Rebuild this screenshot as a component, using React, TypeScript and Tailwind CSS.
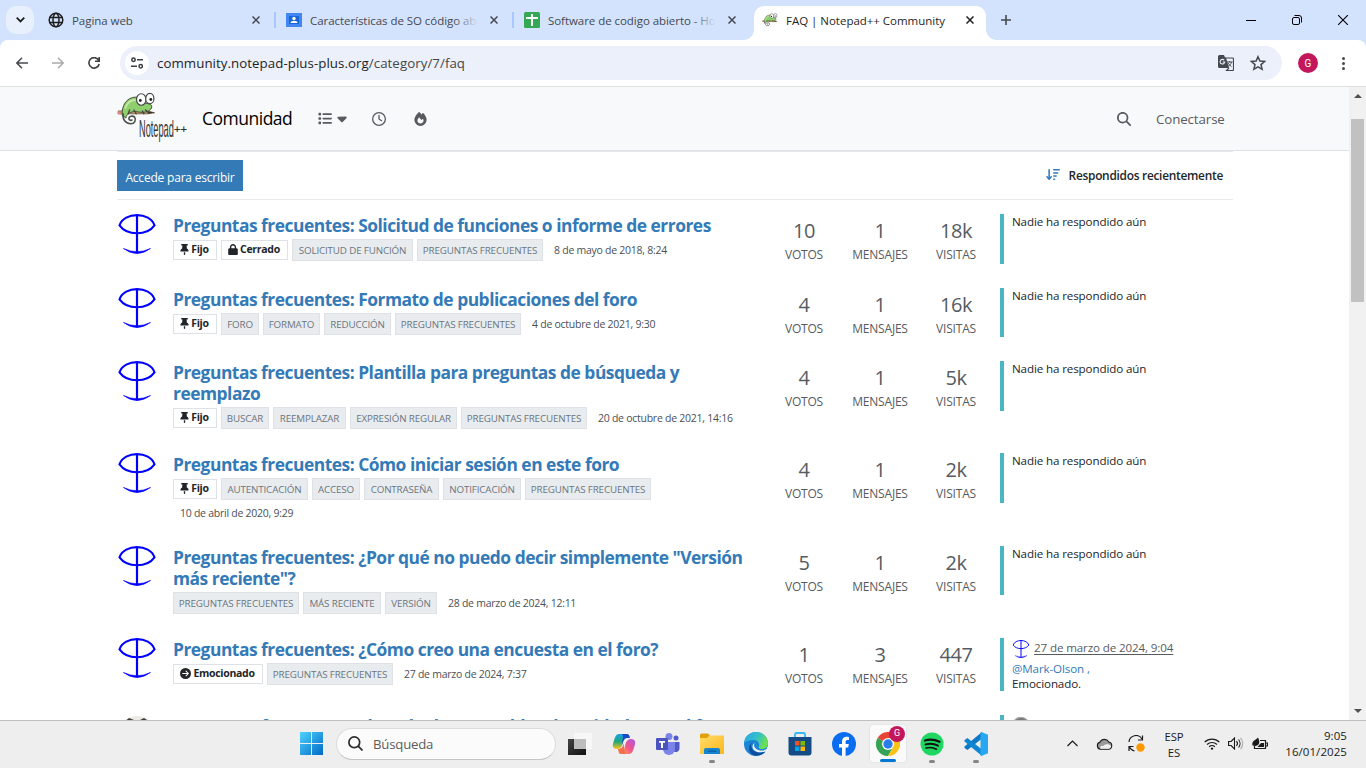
import React from "react";
import {
  FaArrowDownWideShort,
  FaCaretDown,
  FaCircleArrowRight,
  FaFire,
  FaList,
  FaLock,
  FaMagnifyingGlass,
  FaRegClock,
  FaThumbtack,
} from "react-icons/fa6";

/* ---------- shared drawings ---------- */

function Chameleon({ className }: { className: string }) {
  return (
    <svg className={className} viewBox="0 0 42 36" fill="none">
      <path d="M2 22.5h31l7-1-7-2H2z" fill="#c9a06a" stroke="#6b4a35" strokeWidth="0.8" />
      <path d="M1 20h5v3H1z" fill="#d98880" />
      <path d="M33 20l7 1.2-7 1.2z" fill="#333" />
      <path
        d="M6 24C5 14 11 5 20 5c5 0 6 3 9 6 4 1 8 1 8 4 0 4-6 6-10 6-5 0-8-2-12 0-4 2-5 4-5 6z"
        fill="#8fce6c"
        stroke="#3c4a35"
        strokeWidth="1"
      />
      <path d="M9 17c2-6 6-9 11-9" stroke="#c3e8a5" strokeWidth="2" />
      <path
        d="M7 22c-1 7 3 11 8 11 4 0 6-4 4-7-2-2-6-1-6 1.500 0 2 3 2.500 3.500 1"
        stroke="#4a5049"
        strokeWidth="1.700"
      />
      <path d="M14 18l-2 5M18 18l3 5M27 19l2 4M30 18l4 4" stroke="#444" strokeWidth="1.400" />
      <ellipse cx="26" cy="7.500" rx="5" ry="6" fill="#fff" stroke="#444" strokeWidth="1.200" />
      <ellipse cx="35" cy="6.500" rx="4.300" ry="5.500" fill="#fff" stroke="#444" strokeWidth="1.200" />
      <circle cx="25" cy="8.500" r="1.500" fill="#222" />
      <circle cx="36" cy="7.500" r="1.500" fill="#222" />
    </svg>
  );
}

function Avatar({ className }: { className: string }) {
  return (
    <svg className={className} viewBox="0 0 40 40" fill="none">
      <path d="M2.500 11.300C7-2.300 33-2.300 37.500 11.300C30 21.800 10 21.800 2.500 11.300z" stroke="#0000ff" strokeWidth="2.100" />
      <path d="M20 1v38.500" stroke="#0000ff" strokeWidth="2.200" />
      <path d="M6.500 34.500Q20 41 33.500 34.500Q20 44.500 6.500 34.500z" fill="#0000ff" stroke="#0000ff" strokeWidth="0.600" />
    </svg>
  );
}

function Cross({ className }: { className: string }) {
  return (
    <svg className={className} viewBox="0 0 8 8" stroke="currentColor" strokeWidth="1.500">
      <path d="M0.500 0.500l7 7M7.500 0.500l-7 7" />
    </svg>
  );
}

/* ---------- browser chrome ---------- */

type TabProps = { icon: React.ReactNode; title: string; active?: boolean; line?: boolean; fade?: boolean };

function Tab({ icon, title, active, line, fade }: TabProps) {
  return (
    <div className={"relative flex h-[34px] w-[238px] shrink-0 items-center pl-[9px]" + (active ? " pb-[6px]" : "")}>
      {active && (
        <>
          <span className="absolute inset-y-0 left-[1px] w-[232px] rounded-t-[10px] bg-white" />
          <span className="absolute bottom-0 -left-[9px] h-[10px] w-[10px] bg-[radial-gradient(circle_at_0_0,#d3e3fd_9.500px,#fff_10px)]" />
          <span className="absolute bottom-0 left-[233px] h-[10px] w-[10px] bg-[radial-gradient(circle_at_100%_0,#d3e3fd_9.500px,#fff_10px)]" />
        </>
      )}
      <span className="relative h-4 w-4">{icon}</span>
      <span className={"relative mt-px ml-2 w-[168px] overflow-hidden text-[11.500px] leading-4 whitespace-nowrap" + (active ? " tracking-[-0.02px] text-[#1f1f1f]" : " tracking-[-0.05px] text-[#45494f]")}>
        {title}
        {fade && <span className="absolute inset-y-0 right-0 w-6 bg-gradient-to-r from-[#d3e3fd]/0 to-[#d3e3fd]" />}
      </span>
      <Cross className={active ? "relative ml-[12px] h-2 w-2 text-[#1f1f1f]" : "relative ml-[12px] h-2 w-2 text-[#45494f]"} />
      {line && <span className="absolute top-[9px] right-[1px] h-4 w-[2px] bg-[#a8c7fa]" />}
    </div>
  );
}

function TabStrip() {
  return (
    <div className="flex h-10 items-end bg-[#d3e3fd]">
      <div className="mb-[6px] ml-[6px] flex h-7 w-7 items-center justify-center rounded-[10px] bg-[#e9f0fd]">
        <svg className="h-[6px] w-[9px]" viewBox="0 0 9 6" fill="none" stroke="#1f1f1f" strokeWidth="1.800">
          <path d="M0.700 0.700l3.800 3.800 3.800-3.800" />
        </svg>
      </div>
      <div className="ml-[5px] flex h-[34px] items-start pb-0">
        <div className="-mt-[3px] flex h-[34px]">
          <Tab
            line
            title="Pagina web"
            icon={
              <svg viewBox="0 0 16 16" fill="none" stroke="#1f1f1f" strokeWidth="1.500">
                <circle cx="8" cy="8" r="6.800" />
                <ellipse cx="8" cy="8" rx="3" ry="6.800" />
                <path d="M1.500 5.500h13M1.500 10.500h13" />
              </svg>
            }
          />
          <Tab
            line
            fade
            title="Características de SO código abierto"
            icon={
              <svg viewBox="0 0 16 16">
                <path d="M0 1h16v14H0z" fill="#4285f4" />
                <path d="M3 4h10v8H3z" fill="#1967d2" />
                <circle cx="8" cy="6.500" r="1.700" fill="#fff" />
                <path d="M4.500 11c0-3 7-3 7 0z" fill="#fff" />
              </svg>
            }
          />
          <Tab
            fade
            title="Software de codigo abierto - Hojas de cálculo"
            icon={
              <svg viewBox="0 0 16 16">
                <rect width="16" height="16" rx="1.500" fill="#34a853" />
                <path d="M2 5h12v2H9v7H7V7H2zM7 2h2v3H7z" fill="#fff" />
              </svg>
            }
          />
        </div>
        <Tab active title="FAQ | Notepad++ Community" icon={<Chameleon className="h-4 w-4" />} />
      </div>
      <svg className="mb-[15px] ml-[10px] h-[10px] w-[10px]" viewBox="0 0 10 10" stroke="#45494f" strokeWidth="1.600">
        <path d="M5 0v10M0 5h10" />
      </svg>
      <div className="mb-[15px] ml-auto flex items-center gap-9 pr-[18px]">
        <span className="h-px w-[10px] bg-black" />
        <svg className="h-[10px] w-[10px]" viewBox="0 0 10 10" fill="none" stroke="#000" strokeWidth="1">
          <rect x="0.500" y="2.500" width="7" height="7" rx="1.500" />
          <path d="M2.500 0.500H7a2.500 2.500 0 0 1 2.500 2.500v4.500" />
        </svg>
        <svg className="h-[10px] w-[10px]" viewBox="0 0 10 10" stroke="#000" strokeWidth="1.100">
          <path d="M0 0l10 10M10 0L0 10" />
        </svg>
      </div>
    </div>
  );
}

function Toolbar() {
  return (
    <div className="h-[47px] shrink-0 bg-[#d3e3fd]">
      <div className="flex h-[47px] items-center rounded-t-[8px] border-b border-[#dde1dc] bg-white">
        <svg className="ml-4 h-3 w-3" viewBox="0 0 12 12" fill="none" stroke="#45494f" strokeWidth="1.500">
          <path d="M12 6H1M6 0.800L0.900 6 6 11.200" />
        </svg>
        <svg className="ml-[24px] h-3 w-3" viewBox="0 0 12 12" fill="none" stroke="#aaabad" strokeWidth="1.500">
          <path d="M0 6h11M6 0.800L11.100 6 6 11.200" />
        </svg>
        <svg className="ml-[24px] h-3 w-3" viewBox="0 0 12 12" fill="none" stroke="#3c4043" strokeWidth="1.600">
          <path d="M10.600 3.200A5.200 5.200 0 1 0 11.200 7M11.200 0v4.300H7" />
        </svg>
        <div className="ml-5 flex h-[34px] w-[1162px] items-center rounded-full bg-[#ecf0fa] pr-4 pl-[5px]">
          <span className="flex h-6 w-6 items-center justify-center rounded-full bg-white">
            <svg className="h-3 w-3" viewBox="0 0 12 12" fill="none" stroke="#3c4043" strokeWidth="1.500">
              <circle cx="2.500" cy="2.700" r="1.700" />
              <path d="M6 2.700h6M0 9.300h6" />
              <circle cx="9.700" cy="9.300" r="1.700" />
            </svg>
          </span>
          <span className="ml-2 text-[13.300px] leading-5 tracking-[0.050px] whitespace-nowrap text-[#1f1f1f]">
            community.notepad-plus-plus.org<span className="text-[#474747]">/category/7/faq</span>
          </span>
          <svg className="ml-auto h-4 w-4" viewBox="0 0 16 16">
            <path d="M1.500 0H6l1 2.500h1L11 13H1.500A1.500 1.500 0 0 1 0 11.500v-10A1.500 1.500 0 0 1 1.500 0z" fill="#45494f" />
            <path d="M7.500 3h7a1 1 0 0 1 1 1v10.500a1 1 0 0 1-1 1H8.500L11 13" fill="none" stroke="#45494f" strokeWidth="1.200" />
            <path d="M6.200 5.200A2.300 2.300 0 1 0 6.700 7H4.600" fill="none" stroke="#ecf0fa" strokeWidth="1.100" />
            <path d="M9 7h5.500M11.500 6v1M13.500 7c-.5 2-2 3.500-3.500 4.500M10 8c.8 1.500 2 2.500 3.500 3.500" fill="none" stroke="#45494f" strokeWidth="1" />
          </svg>
          <svg className="ml-4 h-4 w-4" viewBox="0 0 16 16" fill="none" stroke="#45494f" strokeWidth="1.500">
            <path d="M8 1.700l1.900 4.400 4.700.4-3.600 3.100 1.100 4.700L8 11.800l-4.100 2.500L5 9.600 1.400 6.500l4.700-.4z" />
          </svg>
        </div>
        <span className="ml-4 flex h-5 w-5 items-center justify-center rounded-full bg-[#c2185b] font-['Roboto',sans-serif] text-[10px] text-white">G</span>
        <span className="ml-[24px] flex flex-col gap-[2px]">
          <span className="h-[3px] w-[3px] rounded-full bg-[#45494f]" />
          <span className="h-[3px] w-[3px] rounded-full bg-[#45494f]" />
          <span className="h-[3px] w-[3px] rounded-full bg-[#45494f]" />
        </span>
      </div>
    </div>
  );
}

/* ---------- forum page ---------- */

type Tag = { text: string; width: string };
type Topic = {
  height: string;
  bar: string;
  title: string[];
  badges: { kind: "pin" | "lock" | "move"; text: string; width: string }[];
  tags: Tag[];
  date: string;
  wrapDate?: boolean;
  stats: [string, string, string];
  reply?: boolean;
};

const FAQ: Tag = { text: "PREGUNTAS FRECUENTES", width: "w-[126px]" };
const PIN = { kind: "pin" as const, text: "Fijo", width: "w-[44px]" };

const topics: Topic[] = [
  {
    height: "h-[74px]",
    bar: "h-[50px]",
    title: ["Preguntas frecuentes: Solicitud de funciones o informe de errores"],
    badges: [PIN, { kind: "lock", text: "Cerrado", width: "w-[67px]" }],
    tags: [{ text: "SOLICITUD DE FUNCIÓN", width: "w-[121px]" }, FAQ],
    date: "8 de mayo de 2018, 8:24",
    stats: ["10", "1", "18k"],
  },
  {
    height: "h-[73px]",
    bar: "h-[49px]",
    title: ["Preguntas frecuentes: Formato de publicaciones del foro"],
    badges: [PIN],
    tags: [{ text: "FORO", width: "w-[38px]" }, { text: "FORMATO", width: "w-[57px]" }, { text: "REDUCCIÓN", width: "w-[67px]" }, FAQ],
    date: "4 de octubre de 2021, 9:30",
    stats: ["4", "1", "16k"],
  },
  {
    height: "h-[92px]",
    bar: "h-[50px]",
    title: ["Preguntas frecuentes: Plantilla para preguntas de búsqueda y", "reemplazo"],
    badges: [PIN],
    tags: [{ text: "BUSCAR", width: "w-[48px]" }, { text: "REEMPLAZAR", width: "w-[73px]" }, { text: "EXPRESIÓN REGULAR", width: "w-[107px]" }, FAQ],
    date: "20 de octubre de 2021, 14:16",
    stats: ["4", "1", "5k"],
  },
  {
    height: "h-[93px]",
    bar: "h-[50px]",
    title: ["Preguntas frecuentes: Cómo iniciar sesión en este foro"],
    badges: [PIN],
    tags: [
      { text: "AUTENTICACIÓN", width: "w-[87px]" },
      { text: "ACCESO", width: "w-[48px]" },
      { text: "CONTRASEÑA", width: "w-[75px]" },
      { text: "NOTIFICACIÓN", width: "w-[78px]" },
      FAQ,
    ],
    date: "10 de abril de 2020, 9:29",
    wrapDate: true,
    stats: ["4", "1", "2k"],
  },
  {
    height: "h-[92px]",
    bar: "h-[49px]",
    title: ['Preguntas frecuentes: ¿Por qué no puedo decir simplemente "Versión', 'más reciente"?'],
    badges: [],
    tags: [FAQ, { text: "MÁS RECIENTE", width: "w-[78px]" }, { text: "VERSIÓN", width: "w-[52px]" }],
    date: "28 de marzo de 2024, 12:11",
    stats: ["5", "1", "2k"],
  },
  {
    height: "h-[77px]",
    bar: "h-[53px]",
    title: ["Preguntas frecuentes: ¿Cómo creo una encuesta en el foro?"],
    badges: [{ kind: "move", text: "Emocionado", width: "w-[90px]" }],
    tags: [FAQ],
    date: "27 de marzo de 2024, 7:37",
    stats: ["1", "3", "447"],
    reply: true,
  },
];

function BadgeIcon({ kind }: { kind: "pin" | "lock" | "move" }) {
  if (kind === "pin") return <FaThumbtack className="mr-[2px] h-[11px] w-[9px]" />;
  if (kind === "lock") return <FaLock className="mr-[2px] h-[11px] w-[10px]" />;
  return <FaCircleArrowRight className="mr-[2px] h-[11px] w-[11px]" />;
}

function Stat({ value, label }: { value: string; label: string }) {
  return (
    <div className="w-[76px] text-center text-[#575b5f]">
      <div className="pt-[3px] text-[20px] leading-[28px] tracking-[-0.4px]">{value}</div>
      <div className="pt-[2px] text-[12px] leading-4 tracking-[-0.2px]">{label}</div>
    </div>
  );
}

function TopicRow({ topic }: { topic: Topic }) {
  return (
    <li className={"flex shrink-0 items-start " + topic.height}>
      <Avatar className="h-10 w-10 shrink-0" />
      <div className="ml-4 w-[593px] shrink-0">
        <h3 className="pt-[1px] text-[17.400px] leading-[21px] font-bold tracking-[-0.490px] whitespace-nowrap text-[#337ab7]">
          {topic.title.map((part) => (
            <span key={part} className="block">
              {part}
            </span>
          ))}
        </h3>
        <div className="flex items-start gap-1 pt-[3px]">
          {topic.badges.map((b) => (
            <span
              key={b.text}
              className={"mt-[1px] flex h-5 items-center justify-center border border-[#dee2e6] pr-px pb-[1px] text-[10.500px] font-bold tracking-[-0.300px] whitespace-nowrap text-[#212529] " + b.width}
            >
              <BadgeIcon kind={b.kind} />
              {b.text}
            </span>
          ))}
          {topic.tags.map((t) => (
            <span
              key={t.text}
              className={"flex h-[22px] items-center justify-center border border-[#dee2e6] bg-[#e9ecef] pt-[2px] text-[9.800px] tracking-[-0.15px] whitespace-nowrap text-[#6c757d] " + t.width}
            >
              {t.text}
            </span>
          ))}
          {!topic.wrapDate && <span className="ml-[7px] pt-[3px] text-[10.500px] leading-4 tracking-[-0.26px] whitespace-nowrap text-[#4b5055]">{topic.date}</span>}
        </div>
        {topic.wrapDate && <div className="ml-[7px] pt-[5px] text-[10.500px] leading-4 tracking-[-0.26px] text-[#4b5055]">{topic.date}</div>}
      </div>
      <Stat value={topic.stats[0]} label="VOTOS" />
      <Stat value={topic.stats[1]} label="MENSAJES" />
      <Stat value={topic.stats[2]} label="VISITAS" />
      <div className={"ml-[6px] w-[233px] border-l-4 border-[#4bb5c1] pl-2 text-[11.600px] tracking-[-0.120px] text-[#212529] " + topic.bar}>
        {topic.reply ? (
          <>
            <div className="flex h-[20px] items-center text-[#575b5f]">
              <Avatar className="mt-[1px] mr-1 h-[18px] w-[18px]" />
              <span className="underline underline-offset-2">27 de marzo de 2024, 9:04</span>
            </div>
            <div className="pt-[3px] leading-[15px]">
              <span className="text-[#337ab7]">@Mark-Olson ,</span>
              <br />
              Emocionado.
            </div>
          </>
        ) : (
          <span className="block leading-4">Nadie ha respondido aún</span>
        )}
      </div>
    </li>
  );
}

function ForumHeader() {
  return (
    <header className="flex h-16 shrink-0 items-center border-b border-[#dee2e6] bg-[#f8f9fa] pl-[117px] text-[#575b5f]">
      <svg className="-mt-[2px] h-[51px] w-[70px]" viewBox="0 0 70 51">
        <svg x="-0.500" y="-0.500" width="40" height="36" viewBox="0 0 42 36">
          <Chameleon className="" />
        </svg>
        <text transform="translate(22 45) scale(0.400 1)" fontFamily="'Liberation Sans', sans-serif" fontSize="23" fill="#333">
          Notepad
        </text>
        <text x="57" y="41" fontFamily="'Liberation Sans', sans-serif" fontSize="11" fill="#333" stroke="#333" strokeWidth="0.200">
          ++
        </text>
      </svg>
      <span className="mb-[2px] ml-[15px] w-[116px] text-[17.500px] leading-6 tracking-[-0.5px] text-black">Comunidad</span>
      <FaList className="h-[15px] w-[14px]" />
      <FaCaretDown className="ml-[5px] h-[15px] w-[10px]" />
      <FaRegClock className="ml-[25px] h-[14px] w-[14px]" />
      <FaFire className="ml-[28px] h-[14px] w-[13px]" />
      <FaMagnifyingGlass className="ml-[690px] h-[14px] w-[14px]" />
      <span className="ml-[25px] text-[13.300px] leading-5 tracking-[-0.1px]">Conectarse</span>
    </header>
  );
}

function Forum() {
  return (
    <div className="flex h-[633px] shrink-0 overflow-hidden">
      <div className="flex w-[1349px] flex-col overflow-hidden bg-white">
        <ForumHeader />
        <main className="ml-[117px] flex w-[1116px] flex-col border-t border-[#e6e9ec]">
          <div className="flex h-12 items-start justify-between border-b border-[#e9eaeb] pt-2 pr-[10px]">
            <button className="h-[31px] w-[126px] bg-[#337ab7] pt-[5px] text-[12px] leading-4 tracking-[-0.2px] whitespace-nowrap text-white">Accede para escribir</button>
            <div className="flex items-center pt-[5px] text-[11.900px] leading-5 font-semibold tracking-[-0.270px] text-[#212529]">
              <FaArrowDownWideShort className="mr-[9px] mb-[2px] h-[13px] w-[14px] text-[#337ab7]" />
              Respondidos recientemente
            </div>
          </div>
          <ul className="pt-[14px]">
            {topics.map((t) => (
              <TopicRow key={t.title[0]} topic={t} />
            ))}
            <li className="flex items-start">
              <svg className="mt-px h-10 w-10 shrink-0" viewBox="0 0 40 40">
                <circle cx="20" cy="20" r="20" fill="#ecebe3" />
                <path d="M6 7l6-5 5 2-3 4-8 2zM23 4l4-2 6 4 1 4z" fill="#3f3c38" />
              </svg>
              <h3 className="ml-4 w-[593px] shrink-0 pt-[1px] text-[17.400px] leading-[21px] font-bold tracking-[-0.490px] whitespace-nowrap text-[#337ab7]">
                Preguntas frecuentes: El modo de usar tablas de unidades en el foro
              </h3>
              <div className="ml-[234px] h-[50px] border-l-4 border-[#4bb5c1] pt-[2px] pl-2">
                <span className="block h-[18px] w-[18px] rounded-full bg-[#777] ring-1 ring-[#aaa] ring-inset" />
              </div>
            </li>
          </ul>
        </main>
      </div>
      <div className="flex w-[17px] flex-col items-center bg-[#f1f1f1]">
        <svg className="mt-[7px] h-1 w-[8px]" viewBox="0 0 8 4">
          <path d="M0 4l4-4 4 4z" fill="#505050" />
        </svg>
        <span className="mt-[21px] h-[183px] w-[13px] bg-[#c1c1c1]" />
        <svg className="mt-auto mb-[7px] h-1 w-[8px]" viewBox="0 0 8 4">
          <path d="M0 0l4 4 4-4z" fill="#505050" />
        </svg>
      </div>
    </div>
  );
}

/* ---------- taskbar ---------- */

function AppIcon({ children, running, active }: { children: React.ReactNode; running?: boolean; active?: boolean }) {
  return (
    <span className={active ? "relative flex h-[39px] w-[38px] items-center justify-center rounded-[4px] border border-[#e6e6e6] bg-[#fafafa]" : "relative flex h-[39px] w-[38px] items-center justify-center"}>
      {children}
      {running && <span className="absolute bottom-[0px] left-[16px] h-[3px] w-[6px] rounded-full bg-[#858585]" />}
      {active && <span className="absolute bottom-[0px] left-[10px] h-[3px] w-4 rounded-full bg-[#0078d4]" />}
    </span>
  );
}

function Taskbar() {
  return (
    <div className="flex h-12 shrink-0 items-center border-t border-[#bfbfbf] bg-[#eeeeee] pb-[2px] pl-[300px]">
      <svg className="h-[23px] w-[23px]" viewBox="0 0 23 23">
        <defs>
          <linearGradient id="win" x1="0" y1="0" x2="1" y2="1">
            <stop offset="0" stopColor="#4fd3fc" />
            <stop offset="1" stopColor="#0069c8" />
          </linearGradient>
        </defs>
        <path d="M0 0h11v11H0zM12 0h11v11H12zM0 12h11v11H0zM12 12h11v11H12z" fill="url(#win)" />
      </svg>
      <div className="ml-[13px] flex h-8 w-[220px] items-center rounded-full border border-[#dcdcdc] border-b-[#c4c4c4] bg-[#fbfbfb] pl-[11px]">
        <svg className="h-[15px] w-[15px]" viewBox="0 0 15 15" fill="none" stroke="#2b2b2b" strokeWidth="1.700">
          <circle cx="6.300" cy="6.300" r="5.400" />
          <path d="M10.200 10.200l4.300 4.300" />
        </svg>
        <span className="ml-[10px] text-[13.200px] leading-5 tracking-[-0.2px] text-[#5c5c5c]">Búsqueda</span>
      </div>
      <div className="ml-[5px] flex gap-[6px]">
        <AppIcon>
          <svg className="h-6 w-6" viewBox="0 0 24 24">
            <defs>
              <linearGradient id="taskDark" x1="0" y1="0" x2="1" y2="1">
                <stop offset="0" stopColor="#444" />
                <stop offset="1" stopColor="#111" />
              </linearGradient>
            </defs>
            <path d="M0 7h18v16H0z" fill="url(#taskDark)" />
            <path d="M6 1h18v16H6z" fill="#f7f7f7" />
            <path d="M6 7h12v10H6z" fill="#bdbdbd" />
          </svg>
        </AppIcon>
        <AppIcon>
          <svg className="h-[22px] w-[24px]" viewBox="0 0 24 22">
            <defs>
              <linearGradient id="copA" x1="0" y1="0" x2="0" y2="1">
                <stop offset="0" stopColor="#189fee" />
                <stop offset="0.500" stopColor="#1ea878" />
                <stop offset="1" stopColor="#ffc21a" />
              </linearGradient>
              <linearGradient id="copB" x1="1" y1="0" x2="0" y2="1">
                <stop offset="0" stopColor="#a259f0" />
                <stop offset="0.500" stopColor="#f0548b" />
                <stop offset="1" stopColor="#ffa552" />
              </linearGradient>
            </defs>
            <path d="M7 1h8c-2 1-3 4-4 8-1 5-3 7-6 7C1 16 0 13 1.500 9 3 4 4 1 7 1z" fill="url(#copA)" />
            <path d="M10 1h5c2 0 2.500 2 3 4h-3c-3 0-4 4-5 7 0-4 2-9 0-11z" fill="#1648c8" />
            <path d="M17 21H9c2-1 3-4 4-8 1-5 3-7 6-7 4 0 5 3 3.500 7-1.500 5-2.500 8-5.500 8z" fill="url(#copB)" />
            <path d="M14 21H9c-2 0-2.500-2-3-5 4 0 5-3 6-6 0 5 0 8 2 11z" fill="#f36f4b" />
          </svg>
        </AppIcon>
        <AppIcon>
          <svg className="h-6 w-6" viewBox="0 0 24 24">
            <circle cx="20" cy="6" r="2.500" fill="#5059c9" />
            <path d="M16 10h7.500v6a4 4 0 0 1-7.500 2z" fill="#5059c9" />
            <circle cx="13" cy="4.500" r="3.500" fill="#7b83eb" />
            <path d="M7 10h12v7a6 6 0 0 1-12 0z" fill="#7b83eb" />
            <rect x="0" y="6" width="12" height="12" rx="1" fill="#4b53bc" />
            <path d="M3 9h6v1.700H7V16H5v-5.300H3z" fill="#fff" />
          </svg>
        </AppIcon>
        <AppIcon running>
          <svg className="h-[22px] w-6" viewBox="0 0 24 22">
            <defs>
              <linearGradient id="folder" x1="0" y1="0" x2="1" y2="1">
                <stop offset="0" stopColor="#ffdb6b" />
                <stop offset="1" stopColor="#fbb81c" />
              </linearGradient>
            </defs>
            <path d="M0 6V2a1.500 1.500 0 0 1 1.500-1.500H8L10.500 3 8 6z" fill="#e2a10c" />
            <path d="M0 5h7l2.500-2.500H24V21H0z" fill="url(#folder)" />
            <path d="M4 21v-4a2 2 0 0 1 2-2h12a2 2 0 0 1 2 2v4z" fill="#1683cf" />
            <path d="M8 17.500h8v1.300H8z" fill="#0b5ea6" />
          </svg>
        </AppIcon>
        <AppIcon>
          <svg className="h-6 w-6" viewBox="0 0 24 24">
            <defs>
              <linearGradient id="edgeA" x1="0" y1="0" x2="1" y2="0.400">
                <stop offset="0" stopColor="#2aa5e8" />
                <stop offset="0.600" stopColor="#35c1c5" />
                <stop offset="1" stopColor="#6be052" />
              </linearGradient>
            </defs>
            <circle cx="12" cy="12" r="12" fill="#1c84d4" />
            <path d="M0 11C1 4 6 0 12 0c7 0 12 5 12 11 0 4-3 6-6 6-2.500 0-4-1-3-3 .8-2-.5-6-6-6-4 0-7 1-9 3z" fill="url(#edgeA)" />
            <path d="M7 13c0 7 8 9 14.500 6.500C18 24 12 25 8 22.500c-4-3-4-10 1-12.500-1 1-2 2-2 3z" fill="#0c4f9e" />
            <path d="M10.500 11c-1.500 3.500 1 7 6 7.500 2.500.3 5-.5 6-1.500l1.500-3 .5 6-3.500-.5c-5.500 2-12.500 0-12.500-5 0-1.500.8-2.800 2-3.500z" fill="#eef1f4" />
          </svg>
        </AppIcon>
        <AppIcon>
          <svg className="h-6 w-6" viewBox="0 0 24 24">
            <path d="M7 6V2.500A1.500 1.500 0 0 1 8.500 1h7A1.500 1.500 0 0 1 17 2.500V6" fill="none" stroke="#35b7f1" strokeWidth="1.800" />
            <path d="M0.500 5h23v15.500a3 3 0 0 1-3 3h-17a3 3 0 0 1-3-3z" fill="#154c85" />
            <path d="M7 9h4.500v4.500H7z" fill="#f25022" />
            <path d="M12.500 9H17v4.500h-4.500z" fill="#7fba00" />
            <path d="M7 14.500h4.500V19H7z" fill="#00a4ef" />
            <path d="M12.500 14.500H17V19h-4.500z" fill="#ffb900" />
          </svg>
        </AppIcon>
        <AppIcon>
          <svg className="h-6 w-6" viewBox="0 0 24 24">
            <circle cx="12" cy="12" r="12" fill="#0a6cf0" />
            <path d="M10 24v-8.500H7V12h3V9.500C10 6.300 11.800 4.700 14.600 4.700c1.200 0 2.300.2 2.300.2v3h-1.500c-1.400 0-1.800.8-1.800 1.800V12h3.200l-.6 3.500h-2.600V24z" fill="#fff" />
          </svg>
        </AppIcon>
        <AppIcon active>
          <svg className="h-6 w-6" viewBox="0 0 24 24">
            <path d="M12 12L1.600 6A12 12 0 0 1 22.400 6z" fill="#e94335" />
            <path d="M12 12L1.600 6A12 12 0 0 0 12 24l5.200-9z" fill="#34a353" />
            <path d="M12 6h10.400A12 12 0 0 1 12 24l5.200-9z" fill="#fbc116" />
            <circle cx="12" cy="12" r="6" fill="#fff" />
            <circle cx="12" cy="12" r="4.700" fill="#2b7de9" />
          </svg>
          <span className="absolute top-[1px] right-[1px] flex h-4 w-4 items-center justify-center rounded-full bg-[#c2185b] font-['Roboto',sans-serif] text-[9px] text-white">G</span>
        </AppIcon>
        <AppIcon running>
          <svg className="h-6 w-6" viewBox="0 0 24 24" fill="none" stroke="#111" strokeLinecap="round">
            <circle cx="12" cy="12" r="11.500" fill="#1ed760" stroke="none" />
            <path d="M5 8.500c5-1.500 10-1 14.500 1.300" strokeWidth="2.300" />
            <path d="M5.500 12.500c4.500-1.300 9-.7 12.500 1.200" strokeWidth="1.900" />
            <path d="M6 16c4-1 7.500-.5 10.500 1.200" strokeWidth="1.600" />
          </svg>
        </AppIcon>
        <AppIcon running>
          <svg className="h-6 w-6" viewBox="0 0 24 24">
            <path d="M18 0v6.500L3.500 18 .5 16v-1.500z" fill="#0b79c5" />
            <path d="M.5 8l3-2L18 17.500V24L.5 9.500z" fill="#0f86d2" />
            <path d="M17.500 0L24 2.800v18.400L17.500 24l-1-.5V.5z" fill="#29a8f0" />
          </svg>
        </AppIcon>
      </div>
      <div className="ml-auto flex items-center pr-[19px] text-[#1b1b1b]">
        <svg className="h-[7px] w-[11px]" viewBox="0 0 11 7" fill="none" stroke="#1b1b1b" strokeWidth="1.200">
          <path d="M0.500 6l5-5 5 5" />
        </svg>
        <svg className="ml-[18px] h-[12px] w-[17px]" viewBox="0 0 17 12">
          <path d="M4.500 11.300a3.700 3.700 0 0 1-.5-7.200A5 5 0 0 1 12.800 4a3.700 3.700 0 0 1-.3 7.300z" fill="#9a9a9a" stroke="#1b1b1b" strokeWidth="1.100" />
          <path d="M4.500 10.700c-1-2 1-3.700 3-2.700 1-2.500 6-2.500 7.500 0 0 1.500-1 2.700-2.500 2.700z" fill="#f1f1f1" />
        </svg>
        <svg className="ml-[15px] h-[17px] w-[17px]" viewBox="0 0 17 17" fill="none" stroke="#1b1b1b" strokeWidth="1.200">
          <path d="M1 7a7 7 0 0 1 13-3M14.500 0.500V5H10M1 16v-4.500h4.500M1.500 12a7 7 0 0 0 5 4" />
          <circle cx="12.500" cy="12.500" r="4.200" fill="#ff9800" stroke="none" />
        </svg>
        <span className="mt-[2px] ml-[17px] w-[24px] text-center text-[11.300px] leading-4 tracking-[-0.1px]">
          ESP
          <br />
          ES
        </span>
        <svg className="ml-[18px] h-[13px] w-4" viewBox="0 0 16 13" fill="none" stroke="#1b1b1b" strokeWidth="1.200">
          <path d="M0.700 5a10.500 10.500 0 0 1 14.600 0M3 7.500a7.200 7.200 0 0 1 10 0M5.200 9.800a4 4 0 0 1 5.600 0" />
          <circle cx="8" cy="11.600" r="1.200" fill="#1b1b1b" stroke="none" />
        </svg>
        <svg className="ml-[8px] h-[13px] w-4" viewBox="0 0 16 13" fill="none" stroke="#1b1b1b" strokeWidth="1.100">
          <path d="M0.600 4.500h2.500L6.500 1v11L3.100 8.500H0.600z" />
          <path d="M8.500 4.200a3.500 3.500 0 0 1 0 4.600M10.500 2.500a6 6 0 0 1 0 8" />
          <path d="M12.500 0.800a8.500 8.500 0 0 1 0 11.400" stroke="#aaa" />
        </svg>
        <svg className="ml-[8px] h-[14px] w-4" viewBox="0 0 16 14" fill="none" stroke="#1b1b1b" strokeWidth="1.200">
          <path d="M8 3.500h5.500v8H2.500V9" />
          <path d="M14 6h1.500v3H14" />
          <path d="M0.500 8.500C-.5 4 3 3.500 6 .5c2 4 2 8-2.500 8.500zM9 6h3v4H5.500z" fill="#1b1b1b" stroke="none" />
        </svg>
        <span className="ml-[16px] w-[63px] text-right text-[11.500px] leading-4 tracking-[0.070px] whitespace-nowrap">
          9:05
          <br />
          16/01/2025
        </span>
      </div>
    </div>
  );
}

export default function App() {
  return (
    <div className="flex h-[768px] w-[1366px] flex-col overflow-hidden bg-white font-['Open_Sans','Noto_Sans',sans-serif]">
      <TabStrip />
      <Toolbar />
      <Forum />
      <Taskbar />
    </div>
  );
}
